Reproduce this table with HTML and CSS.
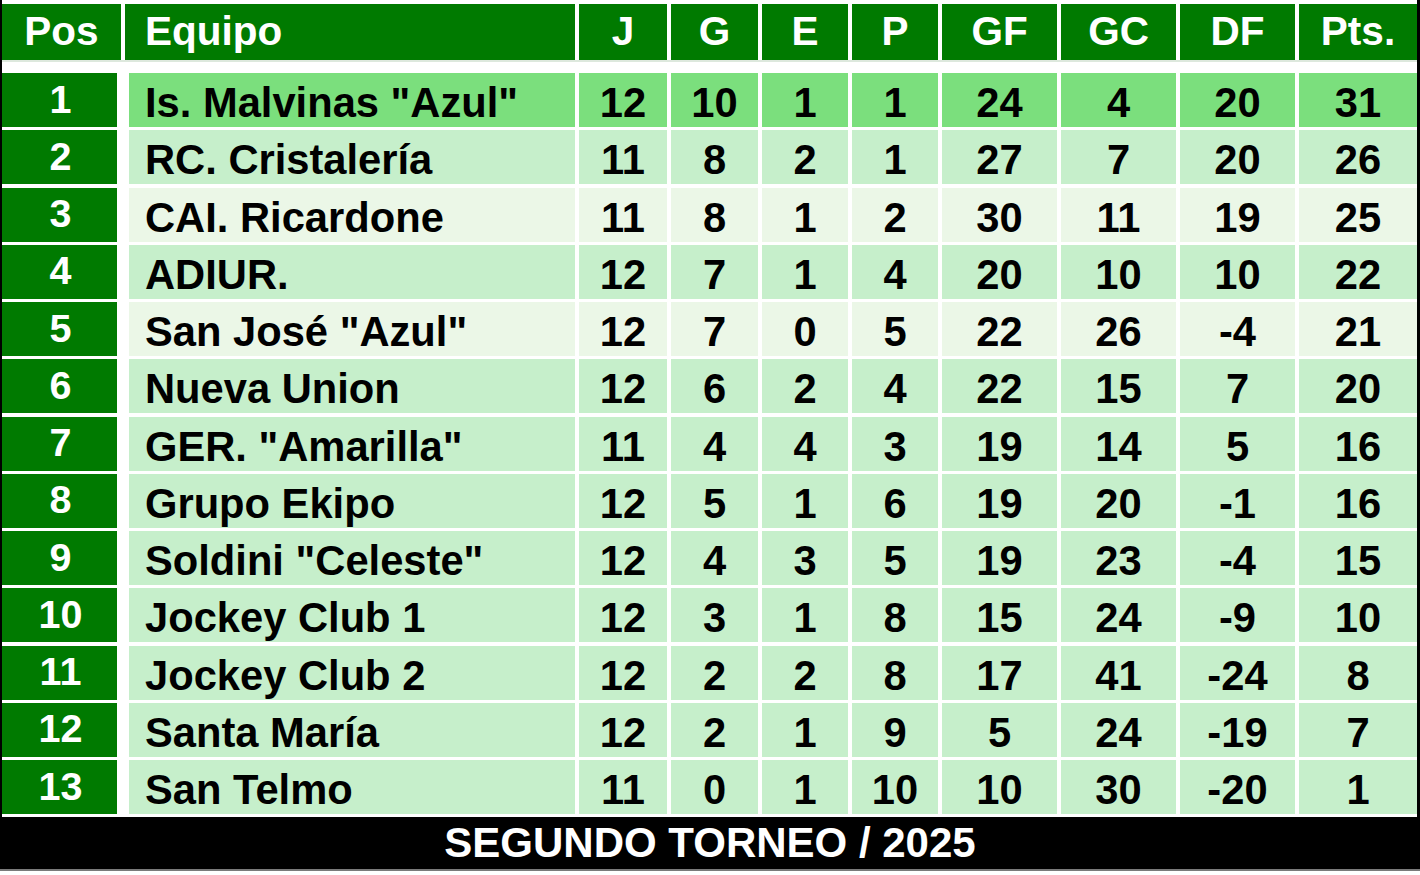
FILE: index.html
```html
<!DOCTYPE html>
<html lang="es">
<head>
<meta charset="utf-8">
<title>Segundo Torneo 2025</title>
<link rel="stylesheet" href="styles.css">
</head>
<body>
<div class="board">
  <div class="line head">
    <div class="h">Pos</div>
    <div class="h h-team">Equipo</div>
    <div class="h">J</div>
    <div class="h">G</div>
    <div class="h">E</div>
    <div class="h">P</div>
    <div class="h">GF</div>
    <div class="h">GC</div>
    <div class="h">DF</div>
    <div class="h">Pts.</div>
  </div>
  <div class="rows">
    <div class="line row top"><div class="pos">1</div><div class="c team">Is. Malvinas "Azul"</div><div class="c">12</div><div class="c">10</div><div class="c">1</div><div class="c">1</div><div class="c">24</div><div class="c">4</div><div class="c">20</div><div class="c">31</div></div>
    <div class="line row light"><div class="pos">2</div><div class="c team">RC. Cristalería</div><div class="c">11</div><div class="c">8</div><div class="c">2</div><div class="c">1</div><div class="c">27</div><div class="c">7</div><div class="c">20</div><div class="c">26</div></div>
    <div class="line row pale"><div class="pos">3</div><div class="c team">CAI. Ricardone</div><div class="c">11</div><div class="c">8</div><div class="c">1</div><div class="c">2</div><div class="c">30</div><div class="c">11</div><div class="c">19</div><div class="c">25</div></div>
    <div class="line row light"><div class="pos">4</div><div class="c team">ADIUR.</div><div class="c">12</div><div class="c">7</div><div class="c">1</div><div class="c">4</div><div class="c">20</div><div class="c">10</div><div class="c">10</div><div class="c">22</div></div>
    <div class="line row pale"><div class="pos">5</div><div class="c team">San José "Azul"</div><div class="c">12</div><div class="c">7</div><div class="c">0</div><div class="c">5</div><div class="c">22</div><div class="c">26</div><div class="c">-4</div><div class="c">21</div></div>
    <div class="line row light"><div class="pos">6</div><div class="c team">Nueva Union</div><div class="c">12</div><div class="c">6</div><div class="c">2</div><div class="c">4</div><div class="c">22</div><div class="c">15</div><div class="c">7</div><div class="c">20</div></div>
    <div class="line row light"><div class="pos">7</div><div class="c team">GER. "Amarilla"</div><div class="c">11</div><div class="c">4</div><div class="c">4</div><div class="c">3</div><div class="c">19</div><div class="c">14</div><div class="c">5</div><div class="c">16</div></div>
    <div class="line row light"><div class="pos">8</div><div class="c team">Grupo Ekipo</div><div class="c">12</div><div class="c">5</div><div class="c">1</div><div class="c">6</div><div class="c">19</div><div class="c">20</div><div class="c">-1</div><div class="c">16</div></div>
    <div class="line row light"><div class="pos">9</div><div class="c team">Soldini "Celeste"</div><div class="c">12</div><div class="c">4</div><div class="c">3</div><div class="c">5</div><div class="c">19</div><div class="c">23</div><div class="c">-4</div><div class="c">15</div></div>
    <div class="line row light"><div class="pos">10</div><div class="c team">Jockey Club 1</div><div class="c">12</div><div class="c">3</div><div class="c">1</div><div class="c">8</div><div class="c">15</div><div class="c">24</div><div class="c">-9</div><div class="c">10</div></div>
    <div class="line row light"><div class="pos">11</div><div class="c team">Jockey Club 2</div><div class="c">12</div><div class="c">2</div><div class="c">2</div><div class="c">8</div><div class="c">17</div><div class="c">41</div><div class="c">-24</div><div class="c">8</div></div>
    <div class="line row light"><div class="pos">12</div><div class="c team">Santa María</div><div class="c">12</div><div class="c">2</div><div class="c">1</div><div class="c">9</div><div class="c">5</div><div class="c">24</div><div class="c">-19</div><div class="c">7</div></div>
    <div class="line row light"><div class="pos">13</div><div class="c team">San Telmo</div><div class="c">11</div><div class="c">0</div><div class="c">1</div><div class="c">10</div><div class="c">10</div><div class="c">30</div><div class="c">-20</div><div class="c">1</div></div>
  </div>
  <div class="foot">SEGUNDO TORNEO / 2025</div>
</div>
</body>
</html>
```
FILE: styles.css
```css
* { box-sizing: border-box; }

html, body {
  margin: 0;
  padding: 0;
  background: #ffffff;
}

body {
  font-family: "Liberation Sans", Arial, sans-serif;
  font-weight: bold;
  width: 1420px;
  height: 875px;
}

.board {
  width: 1420px;
  border-left: 2px solid #000;
  border-right: 3px solid #000;
  padding-top: 4px;
}

.line {
  display: grid;
  grid-template-columns: 119px 450px 88px 87px 86px 86px 115px 115px 115px 118px;
  column-gap: 4px;
}

.head {
  height: 58px;
  border-bottom: 2px solid #dde8dd;
}

.h {
  background: #007a00;
  color: #ffffff;
  font-size: 40.5px;
  display: flex;
  align-items: center;
  justify-content: center;
  padding-bottom: 1px;
}

.h-team {
  justify-content: flex-start;
  padding-left: 20px;
}

.rows {
  margin-top: 11px;
  display: flex;
  flex-direction: column;
  gap: 4px;
}

.row {
  height: 53.25px;
}

.pos {
  background: #007a00;
  color: #ffffff;
  font-size: 39.5px;
  margin-right: 4px;
  display: flex;
  align-items: center;
  justify-content: center;
  padding-bottom: 2px;
  padding-left: 2px;
}

.c {
  color: #000000;
  font-size: 41.7px;
  display: flex;
  align-items: center;
  justify-content: center;
  padding-top: 6px;
}

.team {
  justify-content: flex-start;
  margin-left: 4px;
  padding-left: 16px;
  white-space: nowrap;
}

.top .c { background: #7bdf7d; }
.light .c { background: #c6efcb; }
.pale .c { background: #ebf7e7; }

.foot {
  margin-top: 4px;
  margin-left: -2px;
  margin-right: -3px;
  height: 54px;
  background: #000000;
  border-bottom: 2px solid #7a7a7a;
  color: #ffffff;
  font-size: 42px;
  display: flex;
  align-items: center;
  justify-content: center;
  padding-bottom: 1px;
}
```
